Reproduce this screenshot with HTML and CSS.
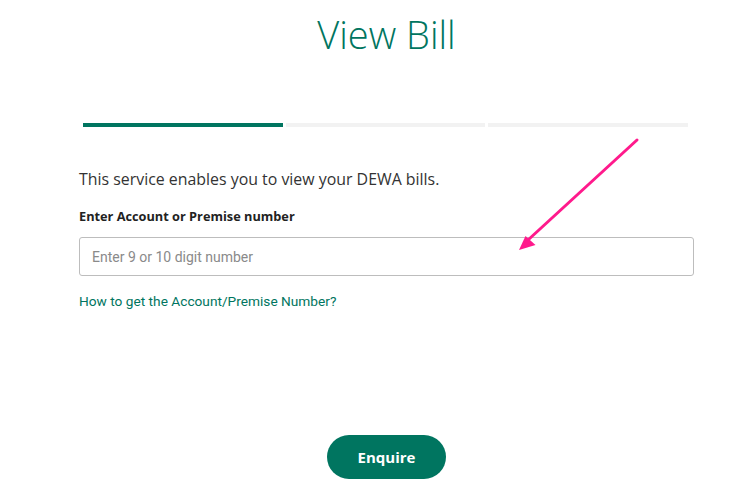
FILE: index.html
```html
<!DOCTYPE html>
<html lang="en">
<head>
    <meta charset="UTF-8">
    <meta name="viewport" content="width=device-width, initial-scale=1.0">
    <title>View Bill</title>
    <link rel="stylesheet" href="styles.css">
</head>
<body>
    <div class="page">
        <h1 class="title">View Bill</h1>

        <div class="steps">
            <span class="step active"></span>
            <span class="step"></span>
            <span class="step"></span>
        </div>

        <p class="intro">This service enables you to view your DEWA bills.</p>

        <label class="label" for="account">Enter Account or Premise number</label>
        <input class="field" id="account" type="text" placeholder="Enter 9 or 10 digit number">

        <a class="help" href="#">How to get the Account/Premise Number?</a>

        <div class="actions">
            <button class="btn">Enquire</button>
        </div>
    </div>

    <!-- annotation arrow drawn over the page -->
    <svg class="arrow" width="742" height="499" viewBox="0 0 742 499">
        <line x1="637" y1="140" x2="528" y2="240" stroke="#ff1a8c" stroke-width="3" stroke-linecap="round"/>
        <polygon points="519,250 525.5,236 535.5,245" fill="#ff1a8c"/>
    </svg>
</body>
</html>
```

FILE: styles.css
```css
body {
    margin: 0;
    background-color: #fff;
    font-family: "Open Sans", Arial, sans-serif;
    color: #333;
}
.page {
    width: 615px;
    margin-left: 79px;
    padding-top: 10px;
}
.title {
    margin: 0;
    text-align: center;
    font-size: 38px;
    font-weight: 300;
    line-height: 48px;
    color: #007560;
}
.steps {
    display: flex;
    gap: 3px;
    margin: 65px 6px 0 4px;
}
.step {
    flex: 1;
    height: 4px;
    background-color: #f2f2f2;
}
.step.active {
    background-color: #007560;
}
.intro {
    margin: 41px 0 0;
    font-size: 15.9px;
    line-height: 22px;
}
.label {
    display: block;
    margin-top: 17px;
    font-size: 12.75px;
    font-weight: 700;
    line-height: 18px;
    color: #222;
}
.field {
    display: block;
    box-sizing: border-box;
    width: 100%;
    height: 39px;
    margin-top: 12px;
    padding: 0 12px;
    border: 1px solid #bdbdbd;
    border-radius: 3px;
    font-family: Roboto, Arial, sans-serif;
    font-size: 14px;
    color: #333;
}
.field::placeholder {
    color: #8a8a8a;
}
.help {
    display: block;
    width: fit-content;
    margin-top: 15px;
    font-family: Roboto, Arial, sans-serif;
    font-size: 13.7px;
    line-height: 20px;
    color: #007560;
    text-decoration: none;
}
.actions {
    display: flex;
    justify-content: center;
    margin-top: 124px;
}
.btn {
    width: 119px;
    height: 44px;
    border: none;
    border-radius: 22px;
    background-color: #007560;
    color: #fff;
    font-family: "Open Sans", Arial, sans-serif;
    font-size: 15px;
    font-weight: 700;
    cursor: pointer;
}
.arrow {
    position: absolute;
    left: 0;
    top: 0;
    pointer-events: none;
}
```
